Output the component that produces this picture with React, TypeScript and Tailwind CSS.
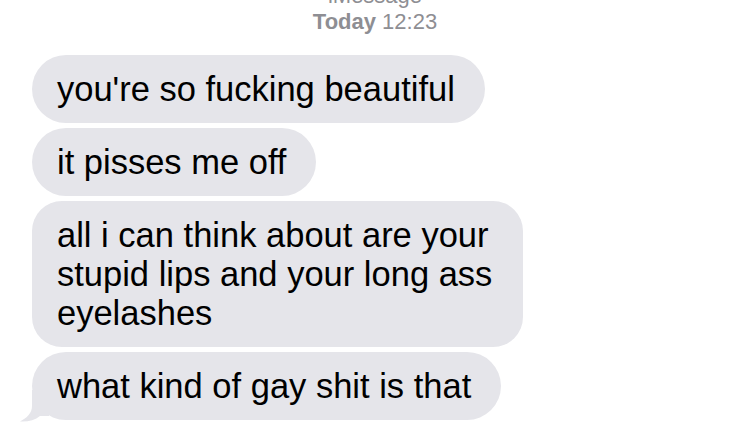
import React from "react";

const messages = [
    { id: 1, lines: ["you're so fucking beautiful"] },
    { id: 2, lines: ["it pisses me off"] },
    {
        id: 3,
        lines: [
            "all i can think about are your",
            "stupid lips and your long ass",
            "eyelashes",
        ],
        wide: true,
    },
    { id: 4, lines: ["what kind of gay shit is that"], tail: true },
];

function Tail() {
    return (
        <svg
            className="absolute left-[-13px] bottom-[-2px]"
            width="30"
            height="32"
            viewBox="0 0 30 32"
        >
            <path
                d="M13 0 L13 16 C13 23 8 28 1 31.5 C9 32 16 30 21 26 L30 26 L30 0 Z"
                fill="#e5e5ea"
            />
        </svg>
    );
}

export default function App() {
    return (
        <div
            className="w-[735px] h-[429px] bg-white overflow-hidden"
            style={{ fontFamily: '"Liberation Sans", Arial, sans-serif' }}
        >
            {/* Header */}
            <div className="mt-[-17px] pl-[15px] flex flex-col items-center text-[22px] leading-[26px] text-[#8e8e93]">
                <div>iMessage</div>
                <div>
                    <span className="font-bold">Today</span> 12:23
                </div>
            </div>

            {/* Messages */}
            <div className="mt-[20px] pl-[32px] flex flex-col items-start gap-[5px]">
                {messages.map((m) => (
                    <div
                        key={m.id}
                        className={`relative bg-[#e5e5ea] text-black text-[34.5px] leading-[39px] pl-[25px] pr-[30px] py-[14.5px] whitespace-nowrap ${
                            m.wide ? "w-[491px] rounded-[30px]" : "rounded-[34px]"
                        }`}
                    >
                        {m.lines.map((line, i) => (
                            <div key={i}>{line}</div>
                        ))}
                        {m.tail && <Tail />}
                    </div>
                ))}
            </div>
        </div>
    );
}
